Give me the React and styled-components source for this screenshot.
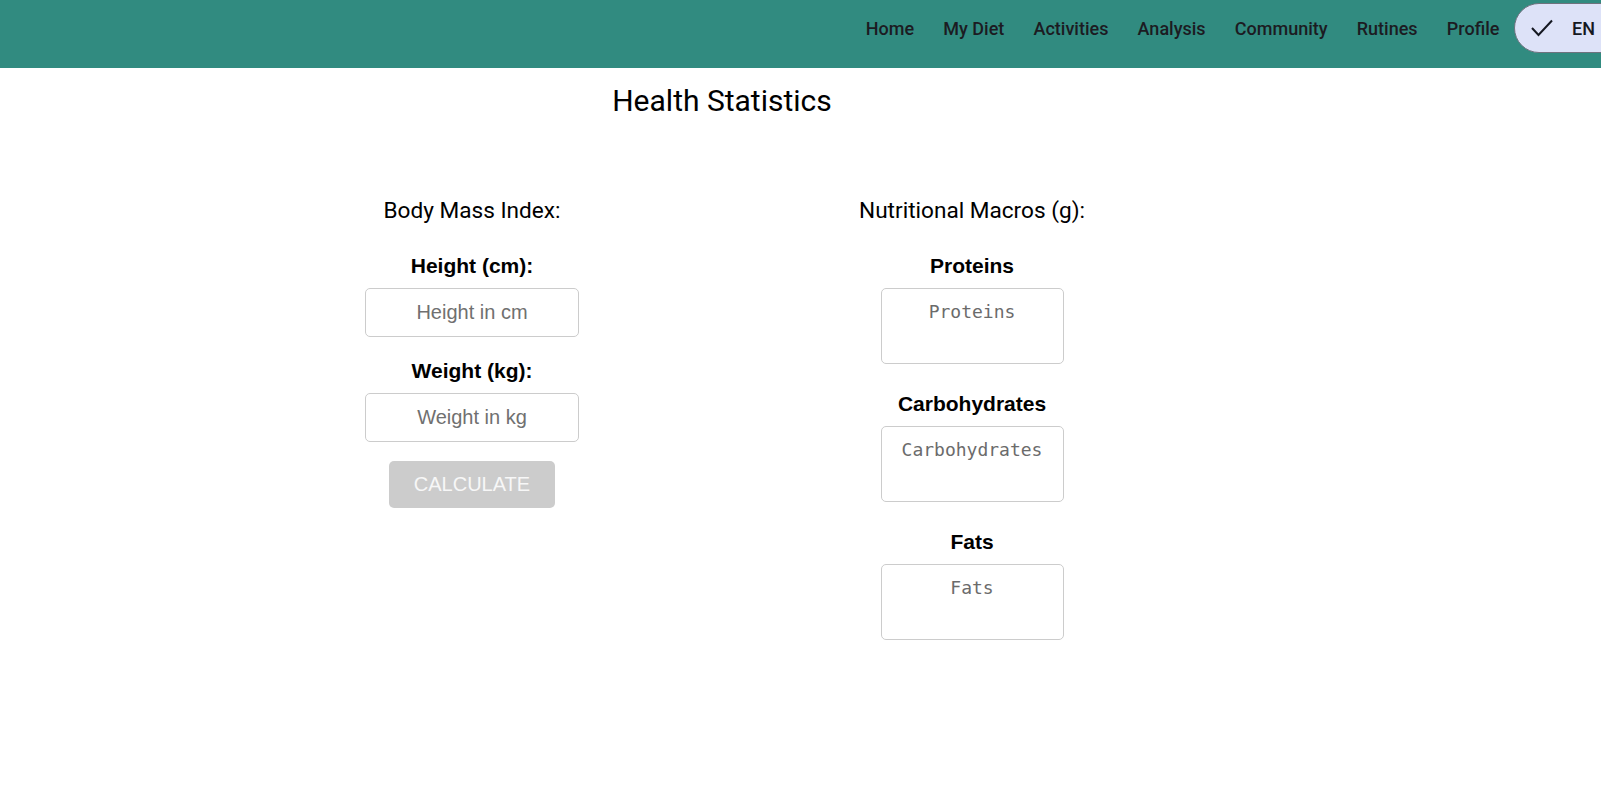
import React from "react";
import styled, { createGlobalStyle } from "styled-components";

const Global = createGlobalStyle`
  html, body { margin: 0; padding: 0; background: #fff; }
  body { font-family: Roboto, "Liberation Sans", sans-serif; color: #000; }
  * { box-sizing: border-box; }
`;

const Header = styled.header`
  height: 68px;
  background: #318b80;
  display: flex;
  justify-content: flex-end;
  align-items: flex-start;
  padding-top: 3px;
  overflow: hidden;
`;

const Nav = styled.nav`
  display: flex;
  align-items: center;
  height: 50px;
`;

const NavLink = styled.a`
  font-family: Roboto, sans-serif;
  font-weight: 500;
  font-size: 18px;
  color: #1c1b22;
  padding: 0 14.6px;
  text-decoration: none;
  line-height: 50px;
  margin-top: 1px;
`;

const LangPill = styled.button`
  flex-shrink: 0;
  width: 120px;
  height: 50px;
  margin-right: -33px;
  border-radius: 25px;
  border: 1px solid #6e727e;
  background: #dde2f8;
  display: flex;
  align-items: center;
  padding: 0 0 0 16px;
  gap: 19px;
  font-family: Roboto, sans-serif;
  font-weight: 500;
  font-size: 18px;
  color: #151822;
  cursor: pointer;
`;

const Main = styled.main`
  width: 1000px;
  margin-left: 222px;
  display: flex;
  flex-direction: column;
  align-items: center;
`;

const Title = styled.h1`
  margin: 15px 0 0;
  font-family: Roboto, sans-serif;
  font-weight: 400;
  font-size: 30px;
  line-height: 35px;
`;

const Columns = styled.div`
  margin-top: 80px;
  display: grid;
  grid-template-columns: 500px 500px;
  width: 100%;
`;

const Column = styled.section`
  display: flex;
  flex-direction: column;
  align-items: center;
`;

const SubTitle = styled.h2`
  margin: 0 0 30px;
  font-family: Roboto, sans-serif;
  font-weight: 400;
  font-size: 22.6px;
  line-height: 26px;
`;

const Field = styled.div`
  display: flex;
  flex-direction: column;
  align-items: center;
  margin-bottom: ${(p) => p.$gap}px;
`;

const Label = styled.label`
  font-family: "Liberation Sans", Arial, sans-serif;
  font-weight: 700;
  font-size: 21px;
  line-height: 24px;
  margin-bottom: 9.5px;
`;

const TextInput = styled.input`
  width: 214px;
  height: 49px;
  border: 1px solid #cccccc;
  border-radius: 5px;
  font-family: "Liberation Sans", Arial, sans-serif;
  font-size: 20px;
  text-align: center;
  outline: none;
  &::placeholder { color: #707070; }
`;

const MacroBox = styled.textarea`
  width: 183px;
  height: 76px;
  border: 1px solid #cccccc;
  border-radius: 5px;
  font-family: "DejaVu Sans Mono", "Liberation Mono", monospace;
  font-size: 18px;
  line-height: 21px;
  text-align: center;
  padding: 12px 4px 0;
  resize: none;
  outline: none;
  &::placeholder { color: #6b6b6b; }
`;

const CalcButton = styled.button`
  width: 166px;
  height: 47px;
  border: none;
  border-radius: 5px;
  background: #cccccc;
  color: #f7f7f7;
  font-family: "Liberation Sans", Arial, sans-serif;
  font-size: 20px;
  cursor: default;
`;

const Check = () => (
  <svg width="22" height="18" viewBox="0 0 22 18" fill="none">
    <polyline points="1,9 7.5,16 21,1.5" stroke="#151822" strokeWidth="2" />
  </svg>
);

export default function App() {
  const links = ["Home", "My Diet", "Activities", "Analysis", "Community", "Rutines", "Profile"];
  return (
    <>
      <Global />
      <Header>
        <Nav>
          {links.map((l) => (
            <NavLink key={l} href="#">{l}</NavLink>
          ))}
        </Nav>
        <LangPill>
          <Check />
          EN
        </LangPill>
      </Header>
      <Main>
        <Title>Health Statistics</Title>
        <Columns>
          <Column>
            <SubTitle>Body Mass Index:</SubTitle>
            <Field $gap={22.5}>
              <Label>Height (cm):</Label>
              <TextInput placeholder="Height in cm" />
            </Field>
            <Field $gap={19.5}>
              <Label>Weight (kg):</Label>
              <TextInput placeholder="Weight in kg" />
            </Field>
            <CalcButton disabled>CALCULATE</CalcButton>
          </Column>
          <Column>
            <SubTitle>Nutritional Macros (g):</SubTitle>
            <Field $gap={28.5}>
              <Label>Proteins</Label>
              <MacroBox placeholder="Proteins" />
            </Field>
            <Field $gap={28.5}>
              <Label>Carbohydrates</Label>
              <MacroBox placeholder="Carbohydrates" />
            </Field>
            <Field $gap={0}>
              <Label>Fats</Label>
              <MacroBox placeholder="Fats" />
            </Field>
          </Column>
        </Columns>
      </Main>
    </>
  );
}
